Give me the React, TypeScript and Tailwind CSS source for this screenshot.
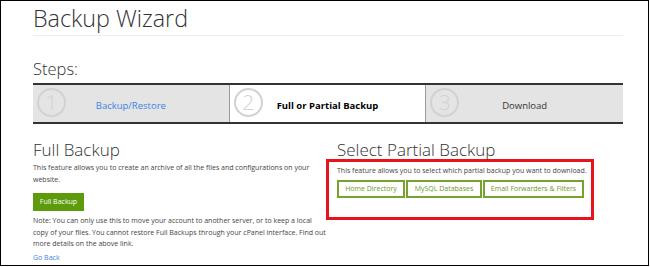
import React from "react";

function Step({ n, label, active, last, labelClass }: { n: string; label: string; active?: boolean; last?: boolean; labelClass: string }) {
  return (
    <div
      className={`relative flex items-center justify-center pt-[6px] ${active ? "bg-white" : "bg-[#e4e4e4]"} ${last ? "" : "border-r border-[#9a9a9a]"}`}
    >
      <div className="absolute left-[4px] top-[3px] flex h-[29px] w-[29px] items-center justify-center rounded-full border-2 border-[#d2d2d2]">
        <span className="text-[21px] font-light leading-none text-[#d2d2d2]">{n}</span>
      </div>
      <span className={labelClass}>{label}</span>
    </div>
  );
}

export default function App() {
  return (
    <div className="h-[266px] w-[649px] overflow-hidden border border-black bg-white font-['Open_Sans',sans-serif] text-[#333]">
      <div className="ml-[32px] w-[590px]">
        <h1 className="border-b border-[#eeeeee] pb-[3px] pt-[3px] text-[23.3px] font-light leading-[28px] text-[#333]">
          Backup Wizard
        </h1>
        <h2 className="mb-[4px] mt-[23px] text-[16.5px] font-light leading-[20px] text-[#333]">Steps:</h2>
        <div className="grid h-[41px] grid-cols-3 border-y-2 border-[#333]">
          <Step n="1" label="Backup/Restore" labelClass="text-[9.5px] text-[#3b82e6]" />
          <Step n="2" label="Full or Partial Backup" active labelClass="text-[9.5px] font-bold text-black" />
          <Step n="3" label="Download" last labelClass="text-[9.5px] text-[#333]" />
        </div>
        <div className="mt-[15px] flex">
          <div className="w-[304px]">
            <h3 className="text-[17px] font-light leading-[22px]">Full Backup</h3>
            <p className="mt-[1px] pr-[12px] text-[7px] leading-[12px] text-[#444]">
              This feature allows you to create an archive of all the files and configurations on your website.
            </p>
            <button className="mt-[5px] h-[18px] w-[51px] bg-[#5d9b0c] text-[7px] text-white">Full Backup</button>
            <p className="mt-[4px] text-[7px] leading-[11.5px] text-[#444]">
              Note: You can only use this to move your account to another server, or to keep a local
              <br />
              copy of your files. You cannot restore Full Backups through your cPanel interface. Find out
              <br />
              more details on the above link.
            </p>
            <p className="mt-[2px] text-[7px] leading-[12px] text-[#3b82e6]">Go Back</p>
          </div>
          <div className="flex-1">
            <h3 className="text-[17px] font-light leading-[22px]">Select Partial Backup</h3>
            <div className="-ml-[11px] -mt-[2px] h-[61px] w-[268px] border-[3px] border-[#e8141c] pl-[8px] pt-[3px]">
              <p className="text-[7px] leading-[12px] text-[#444]">
                This feature allows you to select which partial backup you want to download.
              </p>
              <div className="mt-[3px] flex gap-[1px]">
                <button className="h-[18px] w-[68px] border-2 border-[#77a22c] text-[7px] text-[#6a9a1e]">Home Directory</button>
                <button className="h-[18px] w-[76px] border-2 border-[#77a22c] text-[7px] text-[#6a9a1e]">MySQL Databases</button>
                <button className="h-[18px] w-[101px] border-2 border-[#77a22c] text-[7px] text-[#6a9a1e]">Email Forwarders &amp; Filters</button>
              </div>
            </div>
          </div>
        </div>
      </div>
    </div>
  );
}
